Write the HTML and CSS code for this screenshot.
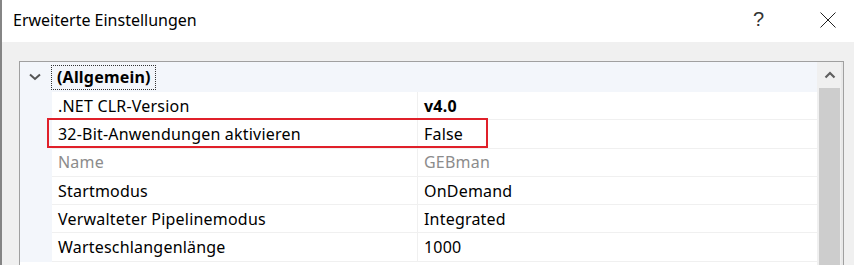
FILE: index.html
```html
<!DOCTYPE html>
<html lang="de">

<head>
    <meta charset="UTF-8">
    <title>Erweiterte Einstellungen</title>
    <link rel="stylesheet" href="styles.css">
</head>

<body>
    <div class="window">
        <div class="titlebar">
            <span class="title">Erweiterte Einstellungen</span>
            <span class="help">?</span>
            <span class="close">
                <svg width="16" height="16" viewBox="0 0 16 16">
                    <path d="M0.5 0.5 L15.5 15.5 M15.5 0.5 L0.5 15.5" stroke="#222" stroke-width="1" fill="none" />
                </svg>
            </span>
        </div>
        <div class="content">
            <div class="grid">
                <div class="rows">
                    <div class="category">
                        <div class="margin">
                            <svg width="12" height="8" viewBox="0 0 12 8">
                                <path d="M1 1.5 L6 6 L11 1.5" stroke="#555" stroke-width="2" fill="none" />
                            </svg>
                        </div>
                        <div class="catname"><span class="focus">(Allgemein)</span></div>
                    </div>
                    <div class="row">
                        <div class="margin"></div>
                        <div class="name">.NET CLR-Version</div>
                        <div class="value bold">v4.0</div>
                    </div>
                    <div class="row">
                        <div class="margin"></div>
                        <div class="name">32-Bit-Anwendungen aktivieren</div>
                        <div class="value">False</div>
                        <div class="mark"></div>
                    </div>
                    <div class="row disabled">
                        <div class="margin"></div>
                        <div class="name">Name</div>
                        <div class="value">GEBman</div>
                    </div>
                    <div class="row">
                        <div class="margin"></div>
                        <div class="name">Startmodus</div>
                        <div class="value">OnDemand</div>
                    </div>
                    <div class="row">
                        <div class="margin"></div>
                        <div class="name">Verwalteter Pipelinemodus</div>
                        <div class="value">Integrated</div>
                    </div>
                    <div class="row">
                        <div class="margin"></div>
                        <div class="name">Warteschlangenlänge</div>
                        <div class="value">1000</div>
                    </div>
                </div>
                <div class="scrollbar">
                    <div class="arrow">
                        <svg width="12" height="8" viewBox="0 0 12 8">
                            <path d="M1.5 6.5 L6 2 L10.5 6.5" stroke="#606060" stroke-width="2.2" fill="none" />
                        </svg>
                    </div>
                    <div class="thumb"></div>
                </div>
            </div>
        </div>
    </div>
</body>

</html>
```

FILE: styles.css
```css
body {
    margin: 0;
    font-family: "Segoe UI", "Noto Sans", "Open Sans", sans-serif;
    font-size: 16px;
    letter-spacing: 0.2px;
    color: #000;
    overflow: hidden;
}

.window {
    height: 265px;
    border-left: 2px solid #858585;
    background: #f0f0f0;
    display: flex;
    flex-direction: column;
}

.titlebar {
    height: 42px;
    background: #fff;
    display: flex;
    align-items: center;
    padding-left: 11px;
    letter-spacing: 0;
}

.title {
    flex: 1;
    font-size: 16px;
    color: #000;
    padding-bottom: 2px;
}

.help {
    font-size: 20px;
    font-family: "Liberation Sans", sans-serif;
    color: #333;
    width: 67px;
    padding-bottom: 3px;
}

.close {
    width: 34px;
    display: flex;
    padding-bottom: 2px;
}

.content {
    flex: 1;
    padding: 19px 10px 0 17px;
}

.grid {
    border: 1px solid #a0a0a0;
    border-bottom: none;
    height: 100%;
    display: flex;
    background: #fff;
}

.rows {
    flex: 1;
}

.margin {
    width: 32px;
    flex-shrink: 0;
    background: #f3f6fb;
    display: flex;
    align-items: center;
    justify-content: center;
}

.category {
    height: 30px;
    display: flex;
    background: #f3f6fb;
}

.category .margin svg {
    margin-left: -2px;
}

.catname {
    display: flex;
    align-items: center;
}

.focus {
    font-weight: bold;
    border: 1px dotted #333;
    padding: 0 4px 1px 5px;
    margin-left: -1px;
}

.row {
    height: 28.3px;
    display: flex;
    position: relative;
}

.row .name,
.row .value {
    border-bottom: 1px solid #f0f0f0;
    display: flex;
    align-items: center;
}

.name {
    width: 359px;
    padding-left: 6px;
    border-right: 1px solid #f0f0f0;
}

.value {
    flex: 1;
    padding-left: 6px;
}

.bold {
    font-weight: bold;
}

.disabled {
    color: #8c8c8c;
}

.mark {
    position: absolute;
    left: 27px;
    top: -2px;
    width: 437px;
    height: 26px;
    border: 2px solid #e0202a;
}

.scrollbar {
    width: 23px;
    border-left: 1px solid #f0f0f0;
    border-right: 2px solid #e8e8e8;
    background: #f0f0f0;
    display: flex;
    flex-direction: column;
}

.arrow {
    height: 26px;
    display: flex;
    align-items: center;
    justify-content: center;
}

.thumb {
    flex: 1;
    margin: 0 1px 0 1px;
    background: #cdcdcd;
}
```
